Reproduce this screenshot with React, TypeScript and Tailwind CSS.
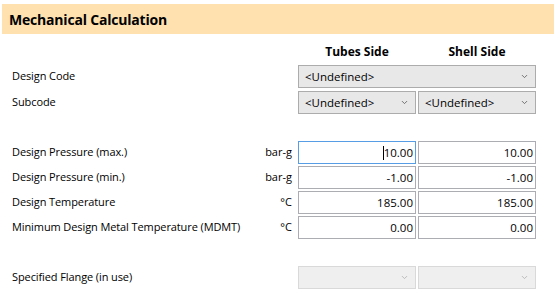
import { ChevronDown } from 'lucide-react';

const font = { fontFamily: '"Open Sans", "Noto Sans", sans-serif' };

const rows = [
  { label: "Design Pressure (max.)", unit: "bar-g", tubes: "10.00", shell: "10.00", focus: true },
  { label: "Design Pressure (min.)", unit: "bar-g", tubes: "-1.00", shell: "-1.00" },
  { label: "Design Temperature", unit: "°C", tubes: "185.00", shell: "185.00" },
  { label: "Minimum Design Metal Temperature (MDMT)", unit: "°C", tubes: "0.00", shell: "0.00" },
];

function Combo({ text, disabled, wide }: { text?: string; disabled?: boolean; wide?: boolean }) {
  return (
    <div
      className={`h-[23px] flex items-center justify-between pl-[6px] pr-[6px] border ${
        wide ? 'w-[238px]' : 'w-[118px]'
      } ${disabled ? 'bg-[#efefef] border-[#d9d9d9]' : 'bg-[#e8e8e8] border-[#acacac]'}`}
    >
      <span className="text-[11.5px] text-black">{text}</span>
      <ChevronDown size={9} strokeWidth={2.5} className={disabled ? 'text-[#b8b8b8]' : 'text-[#6a6a6a]'} />
    </div>
  );
}

function NumBox({ value, focus }: { value: string; focus?: boolean }) {
  return (
    <div
      className={`w-[118px] h-[23px] flex items-center justify-end pr-[2px] bg-white border text-[11.5px] text-black ${
        focus ? 'border-[#569de5]' : 'border-[#abadb3]'
      }`}
    >
      {focus && <span className="w-px h-[14px] bg-black" />}
      {value}
    </div>
  );
}

function Row({ label, unit, children }: { label: string; unit?: string; children: React.ReactNode }) {
  return (
    <div className="flex items-center h-[23px]">
      <div className="flex-1 text-[11px] tracking-[-0.1px] text-black whitespace-nowrap">{label}</div>
      <div className="w-[40px] text-right text-[11px] text-black whitespace-nowrap">{unit}</div>
      <div className="ml-[6px] flex gap-[2px]">{children}</div>
    </div>
  );
}

export default function App() {
  return (
    <div className="w-[554px] h-[297px] bg-white pt-[4px] pl-[2px] overflow-hidden" style={font}>
      {/* Header */}
      <div className="h-[30px] bg-[#ffe1b0] flex items-center pl-[7px]">
        <h1 className="text-[14px] font-bold text-black tracking-[-0.2px]">Mechanical Calculation</h1>
      </div>

      <div className="pl-[10px] pr-[18px]">
        {/* Column titles */}
        <div className="flex mt-[7px] h-[22px] items-center">
          <div className="flex-1" />
          <div className="w-[118px] text-center text-[12px] font-bold ml-[6px]">Tubes Side</div>
          <div className="w-[118px] text-center text-[12px] font-bold ml-[2px]">Shell Side</div>
        </div>

        <div className="mt-[2px] flex flex-col gap-[3px]">
          <Row label="Design Code">
            <Combo text="<Undefined>" wide />
          </Row>
          <Row label="Subcode">
            <Combo text="<Undefined>" />
            <Combo text="<Undefined>" />
          </Row>
        </div>

        <div className="mt-[27px] flex flex-col gap-[2px]">
          {rows.map((r) => (
            <Row key={r.label} label={r.label} unit={r.unit}>
              <NumBox value={r.tubes} focus={r.focus} />
              <NumBox value={r.shell} />
            </Row>
          ))}
        </div>

        <div className="mt-[27px]">
          <Row label="Specified Flange (in use)">
            <Combo disabled />
            <Combo disabled />
          </Row>
        </div>
      </div>
    </div>
  );
}
